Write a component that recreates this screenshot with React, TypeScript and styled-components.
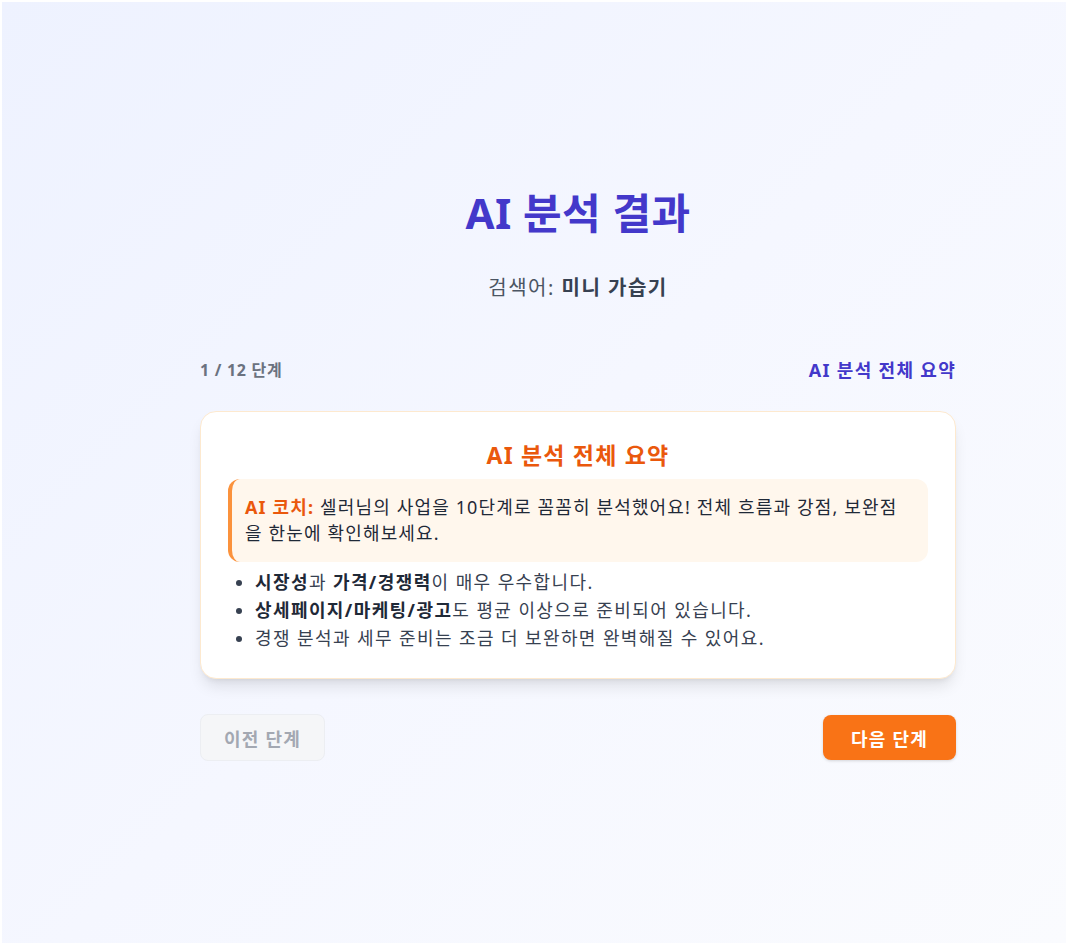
import React from "react";
import styled, { createGlobalStyle } from "styled-components";

const GlobalStyle = createGlobalStyle`
  html, body { margin: 0; padding: 0; background: #ffffff; }
  body { font-family: "Noto Sans", "Noto Sans CJK KR", sans-serif; }
  * { box-sizing: border-box; }
`;

const Page = styled.div`
  margin: 2px;
  min-height: 941px;
  background: linear-gradient(135deg, #eef2ff 0%, #f5f7ff 50%, #fafbfe 100%);
  padding: 182px 0 0 198px;
`;

const Column = styled.div`
  width: 756px;
  display: flex;
  flex-direction: column;
`;

const Title = styled.h1`
  margin: 0;
  text-align: center;
  font-size: 42px;
  line-height: 58px;
  letter-spacing: 0.4px;
  font-weight: 700;
  color: #4338ca;
`;

const Subtitle = styled.p`
  margin: 32px 0 0;
  text-align: center;
  font-size: 20px;
  line-height: 28px;
  letter-spacing: 1.5px;
  color: #4b5563;
  b { color: #374151; font-weight: 700; }
`;

const StepRow = styled.div`
  margin-top: 54px;
  display: flex;
  justify-content: space-between;
  align-items: center;
`;

const StepCount = styled.span`
  font-size: 16px;
  letter-spacing: 0.7px;
  font-weight: 700;
  color: #6b7280;
`;

const StepName = styled.span`
  font-size: 18px;
  letter-spacing: 1.3px;
  font-weight: 700;
  color: #4338ca;
`;

const Card = styled.section`
  margin-top: 29px;
  background: #ffffff;
  border: 1px solid #fde9cf;
  border-radius: 16px;
  box-shadow: 0 10px 15px -3px rgba(0, 0, 0, 0.1), 0 4px 6px -4px rgba(0, 0, 0, 0.1);
  padding: 27px 27px 26px 27px;
`;

const CardTitle = styled.h2`
  margin: 0;
  text-align: center;
  font-size: 23px;
  line-height: 32px;
  letter-spacing: 1.2px;
  font-weight: 700;
  color: #ea580c;
`;

const Coach = styled.div`
  margin-top: 8px;
  background: #fff7ed;
  border-left: 4px solid #fb923c;
  border-radius: 12px;
  padding: 15px 16px 16px 13px;
  font-size: 18px;
  line-height: 26px;
  letter-spacing: 1.15px;
  color: #1f2937;
`;

const CoachLabel = styled.b`
  color: #ea580c;
  font-weight: 700;
`;

const List = styled.ul`
  margin: 6px 0 0;
  padding-left: 27px;
  font-size: 18px;
  line-height: 28px;
  letter-spacing: 1.4px;
  color: #374151;
  b { color: #1f2937; font-weight: 700; }
`;

const Actions = styled.div`
  margin-top: 35px;
  display: flex;
  justify-content: space-between;
  align-items: center;
`;

const Button = styled.button<{ $primary?: boolean }>`
  font-family: inherit;
  font-size: 18px;
  letter-spacing: 1.2px;
  font-weight: 700;
  border-radius: 8px;
  height: ${(p) => (p.$primary ? "45px" : "47px")};
  width: ${(p) => (p.$primary ? "133px" : "125px")};
  padding: 0;
  border: 1px solid ${(p) => (p.$primary ? "transparent" : "#eceef2")};
  background: ${(p) => (p.$primary ? "#f97316" : "#f5f6f8")};
  color: ${(p) => (p.$primary ? "#ffffff" : "#a3a8b2")};
  box-shadow: ${(p) => (p.$primary ? "0 1px 3px rgba(0,0,0,0.15)" : "none")};
  cursor: ${(p) => (p.$primary ? "pointer" : "default")};
`;

export default function App() {
  return (
    <>
      <GlobalStyle />
      <Page>
        <Column>
          <Title>AI 분석 결과</Title>
          <Subtitle>
            검색어: <b>미니 가습기</b>
          </Subtitle>
          <StepRow>
            <StepCount>1 / 12 단계</StepCount>
            <StepName>AI 분석 전체 요약</StepName>
          </StepRow>
          <Card>
            <CardTitle>AI 분석 전체 요약</CardTitle>
            <Coach>
              <CoachLabel>AI 코치:</CoachLabel> 셀러님의 사업을 10단계로 꼼꼼히 분석했어요! 전체 흐름과 강점, 보완점을 한눈에 확인해보세요.
            </Coach>
            <List>
              <li>
                <b>시장성</b>과 <b>가격/경쟁력</b>이 매우 우수합니다.
              </li>
              <li>
                <b>상세페이지/마케팅/광고</b>도 평균 이상으로 준비되어 있습니다.
              </li>
              <li>경쟁 분석과 세무 준비는 조금 더 보완하면 완벽해질 수 있어요.</li>
            </List>
          </Card>
          <Actions>
            <Button disabled>이전 단계</Button>
            <Button $primary>다음 단계</Button>
          </Actions>
        </Column>
      </Page>
    </>
  );
}
